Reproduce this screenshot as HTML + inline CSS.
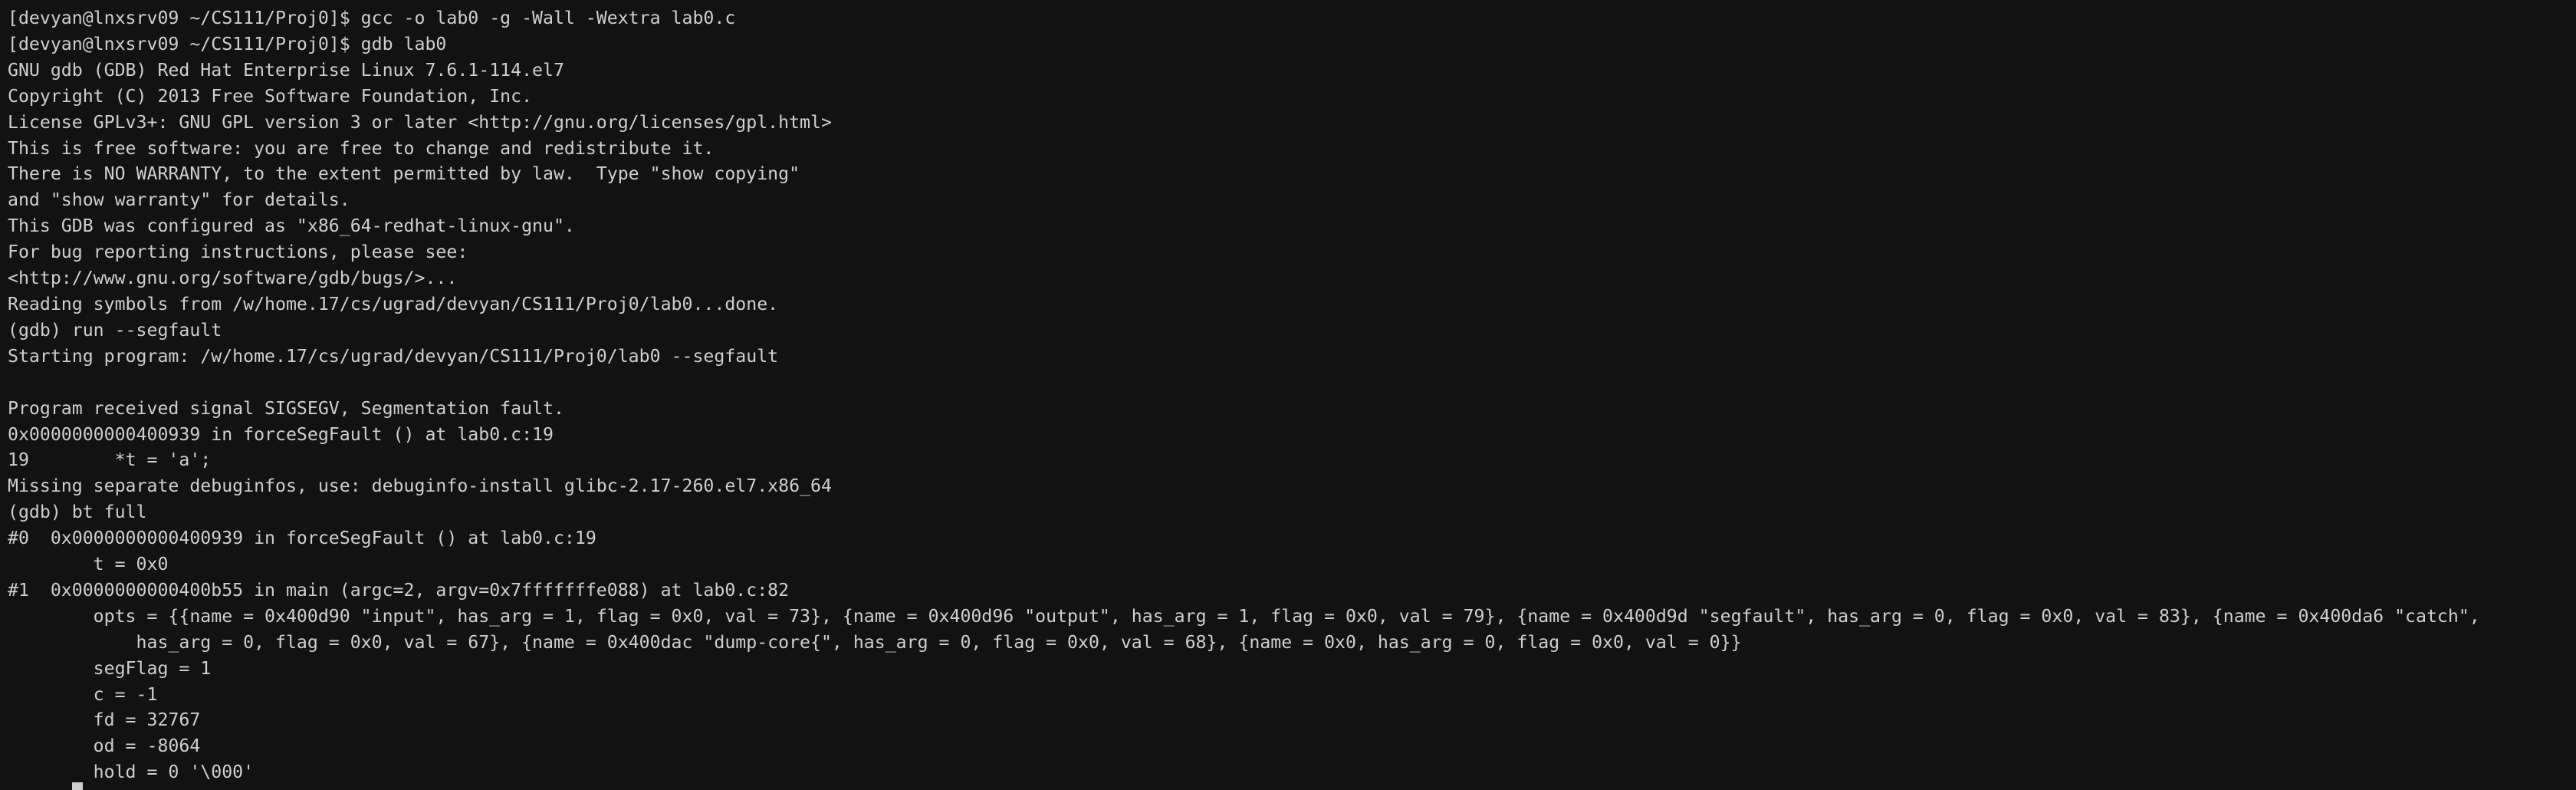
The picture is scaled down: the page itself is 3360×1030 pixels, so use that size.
<!DOCTYPE html>
<html><head><meta charset="utf-8"><style>
html,body{margin:0;padding:0;background:#121212;width:3360px;height:1026px;overflow:hidden}
pre{margin:0;position:absolute;left:10px;top:7px;font-family:"DejaVu Sans Mono","Liberation Mono",monospace;font-size:23.2px;line-height:33.9px;color:#cfcfcf;white-space:pre}
.cur{position:absolute;left:94px;top:1020px;width:14px;height:10px;background:#cfcfcf}
</style></head><body>
<pre>[devyan@lnxsrv09 ~/CS111/Proj0]$ gcc -o lab0 -g -Wall -Wextra lab0.c
[devyan@lnxsrv09 ~/CS111/Proj0]$ gdb lab0
GNU gdb (GDB) Red Hat Enterprise Linux 7.6.1-114.el7
Copyright (C) 2013 Free Software Foundation, Inc.
License GPLv3+: GNU GPL version 3 or later &lt;http://gnu.org/licenses/gpl.html&gt;
This is free software: you are free to change and redistribute it.
There is NO WARRANTY, to the extent permitted by law.  Type "show copying"
and "show warranty" for details.
This GDB was configured as "x86_64-redhat-linux-gnu".
For bug reporting instructions, please see:
&lt;http://www.gnu.org/software/gdb/bugs/&gt;...
Reading symbols from /w/home.17/cs/ugrad/devyan/CS111/Proj0/lab0...done.
(gdb) run --segfault
Starting program: /w/home.17/cs/ugrad/devyan/CS111/Proj0/lab0 --segfault

Program received signal SIGSEGV, Segmentation fault.
0x0000000000400939 in forceSegFault () at lab0.c:19
19	  *t = 'a';
Missing separate debuginfos, use: debuginfo-install glibc-2.17-260.el7.x86_64
(gdb) bt full
#0  0x0000000000400939 in forceSegFault () at lab0.c:19
        t = 0x0
#1  0x0000000000400b55 in main (argc=2, argv=0x7fffffffe088) at lab0.c:82
        opts = {{name = 0x400d90 "input", has_arg = 1, flag = 0x0, val = 73}, {name = 0x400d96 "output", has_arg = 1, flag = 0x0, val = 79}, {name = 0x400d9d "segfault", has_arg = 0, flag = 0x0, val = 83}, {name = 0x400da6 "catch",
            has_arg = 0, flag = 0x0, val = 67}, {name = 0x400dac "dump-core{", has_arg = 0, flag = 0x0, val = 68}, {name = 0x0, has_arg = 0, flag = 0x0, val = 0}}
        segFlag = 1
        c = -1
        fd = 32767
        od = -8064
        hold = 0 '\000'</pre>
<div class="cur"></div>
</body></html>
